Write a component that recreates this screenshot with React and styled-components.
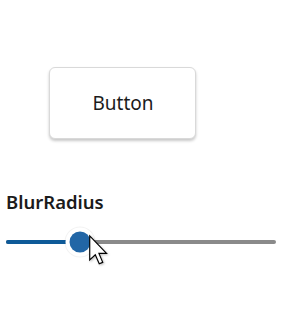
import React from "react";
import styled, { createGlobalStyle } from "styled-components";

const GlobalStyle = createGlobalStyle`
  html, body {
    margin: 0;
    padding: 0;
    background: #ffffff;
  }
  body {
    font-family: "Noto Sans", "Open Sans", sans-serif;
    color: #1b1b1b;
  }
`;

const Page = styled.div`
  display: flex;
  flex-direction: column;
  padding: 67px 19px 0 6px;
  width: 295px;
  height: 330px;
  box-sizing: border-box;
`;

const ButtonRow = styled.div`
  display: flex;
  padding-left: 43px;
`;

const PlainButton = styled.button`
  width: 147px;
  height: 72px;
  padding: 0 0 0 1px;
  border-radius: 6px;
  border: 1px solid #d9d9d9;
  background: #ffffff;
  box-shadow: 0 2px 3px rgba(0, 0, 0, 0.22);
  font-family: "Noto Sans", "Open Sans", sans-serif;
  font-size: 19px;
  line-height: 26px;
  color: #1b1b1b;
  cursor: default;
`;

const Label = styled.div`
  margin-top: 50px;
  font-size: 18.5px;
  font-weight: 600;
  line-height: 26px;
  color: #1b1b1b;
`;

const Slider = styled.div`
  position: relative;
  margin-top: 25px;
  height: 4px;
  width: 270px;
  border-radius: 2px;
  background: #8a8a8a;
`;

const Fill = styled.div`
  height: 100%;
  border-radius: 2px;
  background: #0e5a98;
`;

const Thumb = styled.div`
  position: absolute;
  top: 50%;
  width: 21px;
  height: 21px;
  border-radius: 50%;
  background: #2266a6;
  box-shadow: 0 0 0 4px #ffffff, 0 0 0 5px rgba(0, 0, 0, 0.05);
  transform: translate(-50%, -50%);
`;

const Cursor = styled.svg`
  position: absolute;
  left: 83px;
  top: -5px;
  width: 19px;
  height: 31px;
  overflow: visible;
  filter: drop-shadow(1px 1px 1px rgba(0, 0, 0, 0.25));
`;

export default function App() {
  const value = 74;
  return (
    <>
      <GlobalStyle />
      <Page>
        <ButtonRow>
          <PlainButton>Button</PlainButton>
        </ButtonRow>
        <Label>BlurRadius</Label>
        <Slider>
          <Fill style={{ width: `${value}px` }} />
          <Thumb style={{ left: `${value}px` }} />
          <Cursor viewBox="0 0 13 21">
            <path
              d="M0.5 0.5 L0.5 17 L4.3 13.4 L7 19.6 L9.4 18.6 L6.8 12.5 L12 12.5 Z"
              fill="#ffffff"
              stroke="#000000"
              strokeWidth="0.8"
              strokeLinejoin="miter"
            />
          </Cursor>
        </Slider>
      </Page>
    </>
  );
}
